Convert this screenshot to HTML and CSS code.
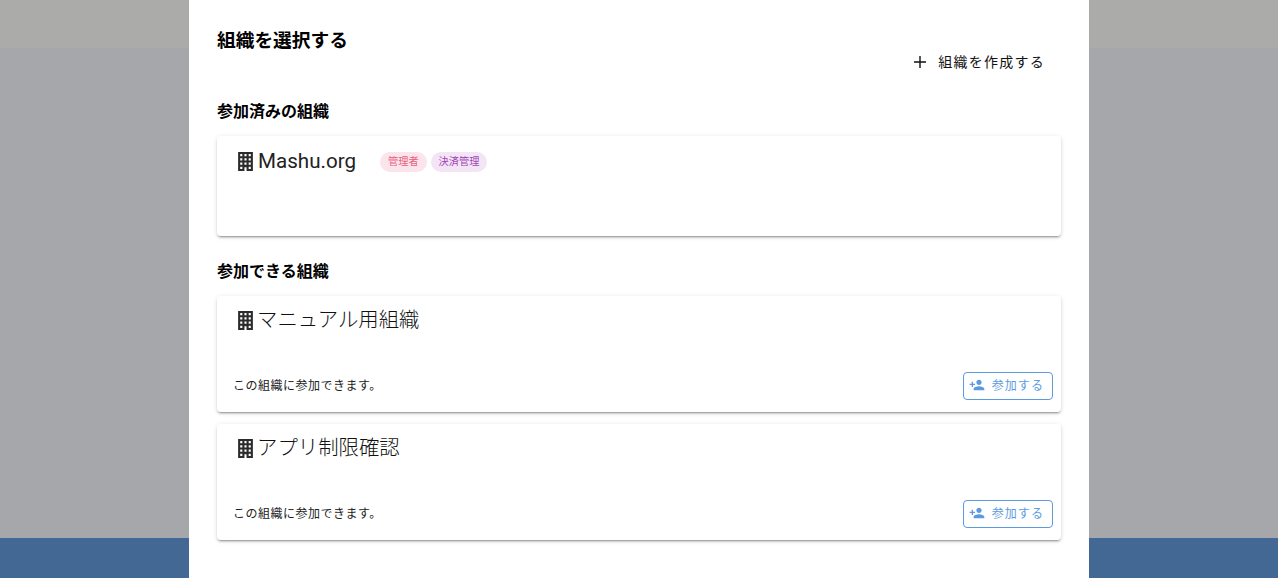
FILE: index.html
```html
<!doctype html>
<html lang="ja">

<head>
	<title>組織を選択する</title>
	<meta charset="UTF-8">
	<link rel="stylesheet" href="styles.css">
</head>

<body>

<div class="app">
	<div class="app-top"></div>
	<div class="app-main"></div>
	<div class="app-foot"></div>
</div>

<div class="org-modal">

	<div class="org-head">
		<h1 class="org-title">組織を選択する</h1>
		<button class="create-btn">
			<svg class="icon-plus" viewBox="0 0 12 12"><path d="M5.300 0h1.400v5.300H12v1.400H6.700V12H5.300V6.700H0V5.300h5.300z" /></svg>
			組織を作成する
		</button>
	</div>

	<h2 class="org-section">参加済みの組織</h2>

	<div class="org-card org-card-joined">
		<div class="org-name org-name-joined">
			<svg class="icon-building" viewBox="5 3 14 18"><path d="M5 3v18h6v-3.500h2V21h6V3H5zm2 2h2v2H7V5zm4 0h2v2h-2V5zm4 0h2v2h-2V5zM7 9h2v2H7V9zm4 0h2v2h-2V9zm4 0h2v2h-2V9zm-8 4h2v2H7v-2zm4 0h2v2h-2v-2zm4 0h2v2h-2v-2zm-8 4h2v2H7v-2zm8 0h2v2h-2v-2z" /></svg>
			<span>Mashu.org</span>
			<span class="chips">
				<span class="chip chip-admin">管理者</span>
				<span class="chip chip-pay">決済管理</span>
			</span>
		</div>
	</div>

	<h2 class="org-section">参加できる組織</h2>

	<div class="org-card">
		<div class="org-name">
			<svg class="icon-building" viewBox="5 3 14 18"><path d="M5 3v18h6v-3.500h2V21h6V3H5zm2 2h2v2H7V5zm4 0h2v2h-2V5zm4 0h2v2h-2V5zM7 9h2v2H7V9zm4 0h2v2h-2V9zm4 0h2v2h-2V9zm-8 4h2v2H7v-2zm4 0h2v2h-2v-2zm4 0h2v2h-2v-2zm-8 4h2v2H7v-2zm8 0h2v2h-2v-2z" /></svg>
			<span>マニュアル用組織</span>
		</div>
		<div class="org-foot">
			<span class="org-note">この組織に参加できます。</span>
			<button class="join-btn">
				<svg class="icon-join" viewBox="0 0 24 24"><path d="M15 12c2.210 0 4-1.790 4-4s-1.790-4-4-4-4 1.790-4 4 1.790 4 4 4zm-9-2V7H4v3H1v2h3v3h2v-3h3v-2H6zm9 4c-2.670 0-8 1.340-8 4v2h16v-2c0-2.660-5.330-4-8-4z" /></svg>
				参加する
			</button>
		</div>
	</div>

	<div class="org-card">
		<div class="org-name">
			<svg class="icon-building" viewBox="5 3 14 18"><path d="M5 3v18h6v-3.500h2V21h6V3H5zm2 2h2v2H7V5zm4 0h2v2h-2V5zm4 0h2v2h-2V5zM7 9h2v2H7V9zm4 0h2v2h-2V9zm4 0h2v2h-2V9zm-8 4h2v2H7v-2zm4 0h2v2h-2v-2zm4 0h2v2h-2v-2zm-8 4h2v2H7v-2zm8 0h2v2h-2v-2z" /></svg>
			<span>アプリ制限確認</span>
		</div>
		<div class="org-foot">
			<span class="org-note">この組織に参加できます。</span>
			<button class="join-btn">
				<svg class="icon-join" viewBox="0 0 24 24"><path d="M15 12c2.210 0 4-1.790 4-4s-1.790-4-4-4-4 1.790-4 4 1.790 4 4 4zm-9-2V7H4v3H1v2h3v3h2v-3h3v-2H6zm9 4c-2.670 0-8 1.340-8 4v2h16v-2c0-2.660-5.330-4-8-4z" /></svg>
				参加する
			</button>
		</div>
	</div>

</div>

</body>
</html>
```

FILE: styles.css
```css
* { box-sizing: border-box; }
html, body { height: 100%; margin: 0; overflow: hidden; }
body { font-family: Roboto, "Noto Sans CJK JP", sans-serif; color: rgba(0, 0, 0, 0.87); }

.app { height: 578px; display: flex; flex-direction: column; }
.app-top { height: 48px; background-color: #ababaa; }
.app-main { flex: 1; background-color: #a5a7ab; }
.app-foot { height: 40px; background-color: #446894; }

.org-modal { position: absolute; top: 0; left: 189px; width: 900px; height: 578px; background-color: #ffffff; padding: 0 28px; }

.org-head { display: flex; justify-content: space-between; height: 80px; }
.org-title { margin: 28px 0 0; font-size: 18.72px; line-height: 27px; font-weight: 700; color: #000000; }
.create-btn { display: flex; align-items: center; height: 36px; margin-top: 44px; padding: 0 16px 2px; border: 0; background: none; font: inherit; font-size: 14px; letter-spacing: 1.25px; color: #111111; }
.icon-plus { width: 12px; height: 12px; margin: 2px 12px 0 1px; fill: #111111; }

.org-section { margin: 21px 0 13px; font-size: 16px; line-height: 22px; font-weight: 700; color: #000000; }

.org-card { height: 116px; margin-bottom: 12px; border-radius: 4px; background-color: #ffffff; display: flex; flex-direction: column; justify-content: space-between; box-shadow: 0 3px 1px -2px rgba(0, 0, 0, 0.2), 0 2px 2px 0 rgba(0, 0, 0, 0.14), 0 1px 5px 0 rgba(0, 0, 0, 0.12); }
.org-card-joined { height: 100px; margin-bottom: 0; }
.org-card-joined + .org-section { margin-top: 25px; }

.org-name { display: flex; align-items: center; height: 32px; margin: 6px 0 0 21px; font-size: 20.4px; font-weight: 300; color: #111111; }
.org-name-joined { margin-top: 9px; font-size: 20.6px; font-weight: 400; color: #222222; }
.icon-building { width: 15px; height: 19px; margin-right: 4px; flex: none; fill: #2b2b2b; position: relative; top: 2px; }
.org-name-joined .icon-building { top: 0; margin-right: 5px; }

.chips { display: flex; gap: 4px; margin: 2px 0 0 24px; }
.chip { height: 20px; line-height: 20px; padding: 0 8px; border-radius: 10px; font-size: 10.2px; font-weight: 400; }
.chip-admin { background-color: #fce4ec; color: #e8607f; }
.chip-pay { background-color: #f3e5f5; color: #a044b4; }

.org-foot { display: flex; justify-content: space-between; padding: 0 8px 12px 16px; }
.org-note { height: 28px; line-height: 28px; font-size: 12px; letter-spacing: 0.5px; color: #222222; }

.join-btn { display: flex; align-items: center; height: 28px; padding: 0 8px 4px 5px; border: 1px solid #5c9ae0; border-radius: 4px; background: none; font: inherit; font-size: 12px; letter-spacing: 1.07px; color: #5c9ae0; }
.icon-join { width: 16px; height: 16px; margin: 2px 7px 0 0; fill: #5c9ae0; }
```
